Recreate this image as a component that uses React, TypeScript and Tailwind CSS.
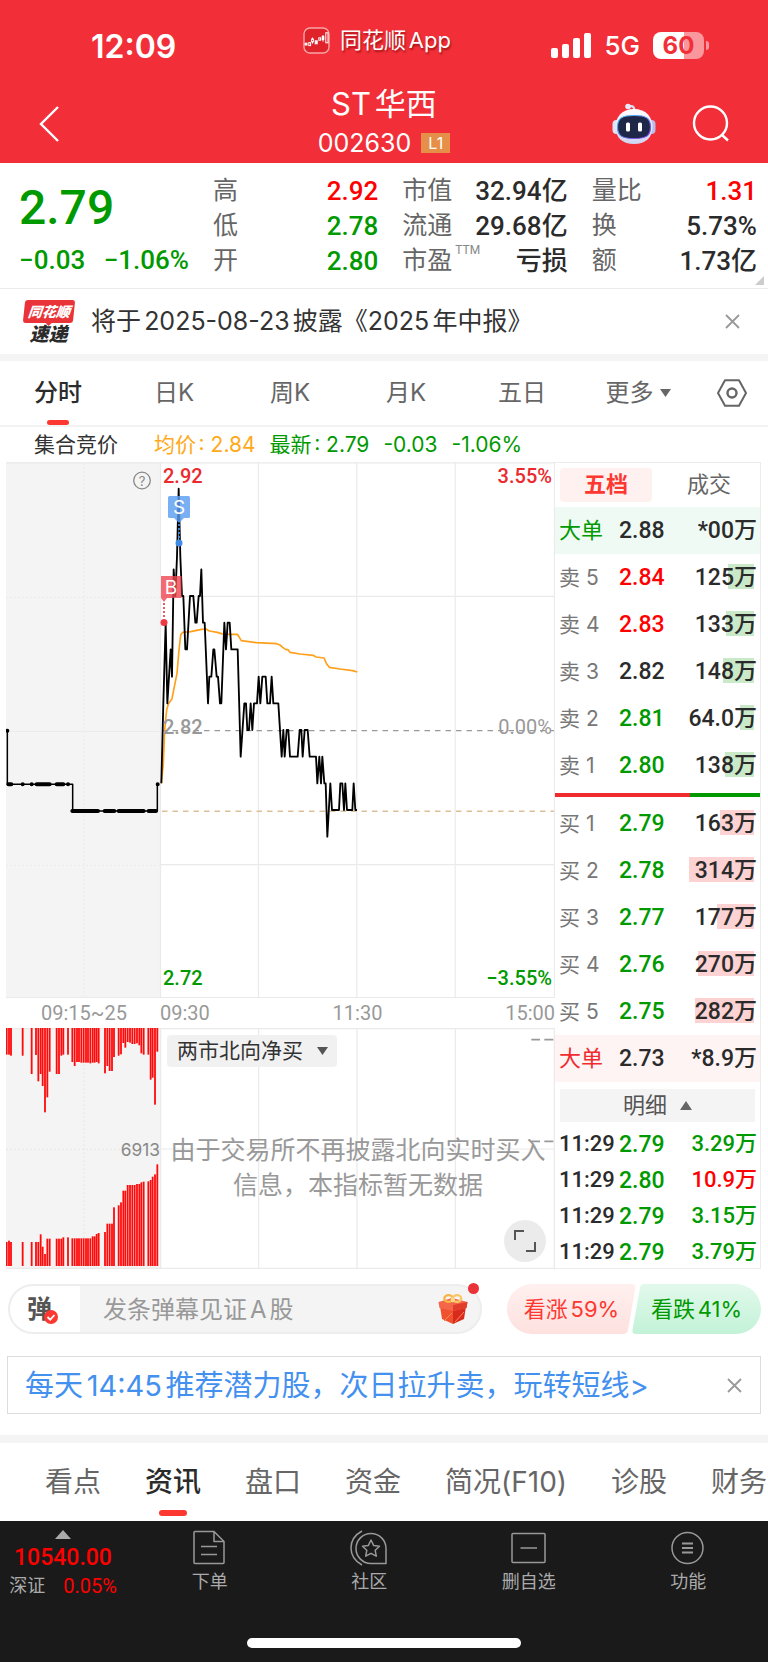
import { ReactNode } from "react";

const NUM = "font-['Roboto','Noto_Sans_CJK_SC',sans-serif] [text-autospace:no-autospace]";

type Tone = "up" | "down" | "flat";
const toneClass: Record<Tone, string> = {
  up: "text-[#ff0000]",
  down: "text-[#009900]",
  flat: "text-[#2b2b2b]",
};

function StatusBar() {
  return (
    <div className="grid h-[84px] grid-cols-[1fr_auto_1fr] items-center">
      <span className="pt-[10px] pl-[91px] text-[32px] leading-none font-semibold">12:09</span>
      <span className="flex items-center gap-[10px] pr-[14px] pb-1">
        <svg className="h-[27px] w-[27px]" viewBox="0 0 27 27" aria-hidden="true">
          <rect x="1" y="1" width="25" height="25" rx="6" fill="#e0222b" stroke="#f9a5a8" strokeWidth="1.4" />
          <g stroke="#fff" strokeWidth="1" fill="none">
            <rect x="2.2" y="16.2" width="1.8" height="1.8" fill="#fff" />
            <rect x="5.8" y="15.6" width="1.8" height="3" />
            <path d="M9.5 10.6v1.4M9.5 15v1.6" />
            <rect x="8.6" y="12" width="1.8" height="2.8" />
            <rect x="12.2" y="13.8" width="2" height="3" fill="#fff" />
            <rect x="15.8" y="10.8" width="1.8" height="2.4" />
            <rect x="19.2" y="9.6" width="1.6" height="3" fill="#fff" />
            <path d="M20 8v6.6" />
            <rect x="22.8" y="5.8" width="2.2" height="10" />
          </g>
        </svg>
        <span className="text-[22px] leading-none text-shadow-[1px_2px_2px_rgb(110_0_0_/_0.6)]">同花顺App</span>
      </span>
      <span className="flex items-center justify-end gap-[13px] pt-[7px] pr-[59px]">
        <svg className="h-[26px] w-[40px]" viewBox="0 0 40 26" fill="#fff" aria-hidden="true">
          <rect x="0" y="15" width="7" height="10" rx="2" />
          <rect x="11" y="11" width="7" height="14" rx="2" />
          <rect x="22" y="5" width="7" height="20" rx="2" />
          <rect x="33" y="0" width="7" height="25" rx="2" />
        </svg>
        <span className="text-[26px] leading-none font-medium">5G</span>
        <span className="flex items-center gap-[2px]">
          <span className="flex h-[27px] w-[51px] items-center justify-center rounded-[8px] bg-[linear-gradient(90deg,#fff_60%,#f9979c_60%)] text-[24px] leading-none font-bold text-[#f22f38]">
            60
          </span>
          <span className="h-[9px] w-[3px] rounded-r-full bg-[#f9979c]" />
        </span>
      </span>
    </div>
  );
}

function Robot() {
  return (
    <svg className="h-[42px] w-[44px]" viewBox="0 0 44 42" aria-hidden="true">
      <defs>
        <linearGradient id="robotHead" x1="0" y1="0" x2="0" y2="1">
          <stop offset="0" stopColor="#ffffff" />
          <stop offset="1" stopColor="#cfd4f2" />
        </linearGradient>
        <linearGradient id="robotRim" x1="0" y1="0" x2="1" y2="1">
          <stop offset="0" stopColor="#45c8f5" />
          <stop offset="1" stopColor="#8a35e8" />
        </linearGradient>
      </defs>
      <path d="M16 4C21 2 22.500 4 22.500 8" fill="none" stroke="#d9def6" strokeWidth="2.200" />
      <circle cx="16" cy="3.500" r="2.800" fill="#e6eafa" />
      <rect x="0.500" y="17" width="8" height="14" rx="4" fill="#dfe3f7" />
      <rect x="35.500" y="17" width="8" height="14" rx="4" fill="#b9bdea" />
      <path d="M22 6C34 6 40.500 14 40.500 24C40.500 35 33 41 22 41S3.500 35 3.500 24C3.500 14 10 6 22 6Z" fill="url(#robotHead)" />
      <path
        d="M22 12.500C34 12.500 38.500 15 38.500 24C38.500 33 34 35.500 22 35.500S5.500 33 5.500 24C5.500 15 10 12.500 22 12.500Z"
        fill="#1e2748"
        stroke="url(#robotRim)"
        strokeWidth="1.200"
      />
      <rect x="14" y="19.500" width="4" height="9" rx="1.500" fill="#fff" />
      <rect x="26" y="19.500" width="4" height="9" rx="1.500" fill="#fff" />
    </svg>
  );
}

function Header() {
  return (
    <header className="bg-[#f22f38] text-white">
      <StatusBar />
      <div className="grid h-[79px] grid-cols-[1fr_auto_1fr] items-center">
        <button aria-label="返回" className="ml-[38px] w-fit">
          <svg className="h-[36px] w-[22px]" viewBox="0 0 22 36" fill="none" stroke="#fff" strokeWidth="2.400" aria-hidden="true">
            <path d="M20 1L3 18L20 35" />
          </svg>
        </button>
        <div className="flex flex-col items-center">
          <h1 className="text-[31px] leading-[38px]">ST华西</h1>
          <p className="flex items-center gap-[10px] text-[25px] leading-[40px]">
            002630
            <span className="flex h-[20px] w-[29px] items-center justify-center bg-[#e58f49] text-[16px]">L1</span>
          </p>
        </div>
        <div className="flex items-center justify-end gap-[36px] pr-[38px]">
          <button aria-label="智能助手">
            <Robot />
          </button>
          <button aria-label="搜索">
            <svg className="h-[38px] w-[38px]" viewBox="0 0 38 38" fill="none" stroke="#fff" strokeWidth="2.400" aria-hidden="true">
              <circle cx="18.500" cy="18" r="16.500" />
              <path d="M29.500 29.500L36 35.500" />
            </svg>
          </button>
        </div>
      </div>
    </header>
  );
}

type Stat = { label: string; note?: string; value: string; tone: Tone };
const statColumns: Stat[][] = [
  [
    { label: "高", value: "2.92", tone: "up" },
    { label: "低", value: "2.78", tone: "down" },
    { label: "开", value: "2.80", tone: "down" },
  ],
  [
    { label: "市值", value: "32.94亿", tone: "flat" },
    { label: "流通", value: "29.68亿", tone: "flat" },
    { label: "市盈", note: "TTM", value: "亏损", tone: "flat" },
  ],
  [
    { label: "量比", value: "1.31", tone: "up" },
    { label: "换", value: "5.73%", tone: "flat" },
    { label: "额", value: "1.73亿", tone: "flat" },
  ],
];

function Quote() {
  return (
    <section className={`relative grid grid-cols-[170px_1fr_1fr_1fr] gap-6 border-b border-[#ececec] pt-[10px] pr-[11px] pb-[10px] pl-[19px] ${NUM}`}>
      <div className="text-[#009900]">
        <p className="h-[70px] text-[48px] leading-[70px] font-medium">2.79</p>
        <p className="flex justify-between text-[26px] leading-[34px] font-medium">
          <span>−0.03</span>
          <span>−1.06%</span>
        </p>
      </div>
      {statColumns.map((column, i) => (
        <dl key={i}>
          {column.map((s) => (
            <div key={s.label} className="flex h-[35px] items-center justify-between whitespace-nowrap">
              <dt className="flex text-[25px] leading-none text-[#666]">
                {s.label}
                {s.note && <sup className="-top-1 ml-[3px] text-[12px] leading-none text-[#888]">{s.note}</sup>}
              </dt>
              <dd className={`text-[26px] leading-none font-medium ${toneClass[s.tone]}`}>{s.value}</dd>
            </div>
          ))}
        </dl>
      ))}
      <svg className="absolute right-[4px] bottom-[3px] h-[9px] w-[9px]" viewBox="0 0 9 9" aria-hidden="true">
        <path d="M9 0V9H0Z" fill="#ccc" />
      </svg>
    </section>
  );
}

function Cross() {
  return (
    <svg className="h-[15px] w-[15px]" viewBox="0 0 15 15" stroke="#999" strokeWidth="1.800" aria-hidden="true">
      <path d="M1 1L14 14M14 1L1 14" />
    </svg>
  );
}

function News() {
  return (
    <section className="flex h-[72px] items-center border-b-[7px] border-[#f4f4f4] pr-[28px] pl-[22px]">
      <div className="flex w-[53px] flex-col items-center italic">
        <span className="relative flex h-[23px] w-[50px] -skew-x-6 items-center justify-center rounded-[3px] bg-[#ea3338] text-[14px] leading-none font-black text-white">
          同花顺
          <svg className="absolute -bottom-[3px] left-[22px] h-[4px] w-[8px]" viewBox="0 0 8 4" aria-hidden="true">
            <path d="M0 0H8L4 4Z" fill="#ea3338" />
          </svg>
        </span>
        <span className="pt-[3px] text-[19px] leading-[18px] font-black text-[#2b2b2b]">速递</span>
      </div>
      <a href="#report" className="ml-4 flex-1 text-[25px] leading-none whitespace-nowrap text-[#333]">
        将于2025-08-23披露《2025年中报》
      </a>
      <button aria-label="关闭公告">
        <Cross />
      </button>
    </section>
  );
}

function PeriodTabs() {
  return (
    <nav className="grid h-[66px] grid-cols-[repeat(6,1fr)_72px] border-b-2 border-[#f2f2f2] text-[24px] text-[#666] [text-autospace:no-autospace]">
      <button className="relative font-medium text-[#2b2b2b]">
        分时
        <span className="absolute bottom-0 left-1/2 h-[5px] w-[22px] -translate-x-1/2 rounded-full bg-[#fd3830]" />
      </button>
      <button>日K</button>
      <button>周K</button>
      <button>月K</button>
      <button>五日</button>
      <button className="flex items-center justify-center gap-[6px]">
        更多
        <svg className="h-[8px] w-[11px]" viewBox="0 0 11 8" fill="#666" aria-hidden="true">
          <path d="M0 0H11L5.500 8Z" />
        </svg>
      </button>
      <button aria-label="设置" className="flex items-center justify-center">
        <svg className="h-[28px] w-[30px]" viewBox="0 0 30 28" fill="none" stroke="#666" strokeWidth="2" strokeLinejoin="round" aria-hidden="true">
          <path d="M8 1.200H22L29 14L22 26.800H8L1 14Z" />
          <circle cx="15" cy="14" r="4.500" strokeWidth="2.400" />
        </svg>
      </button>
    </nav>
  );
}

function PriceSummary() {
  return (
    <div className="flex h-[35px] items-center pl-[34px] text-[21px] leading-none whitespace-nowrap">
      <span className="w-[120px] text-[#333]">集合竞价</span>
      <p className="flex gap-[14px] text-[#009900]">
        <span className="text-[#ffa91a]">均价: 2.84</span>
        <span>最新: 2.79</span>
        <span>-0.03</span>
        <span>-1.06%</span>
      </p>
    </div>
  );
}

const pricePoints =
  "484,700 490,460 497,218 502,460 507,380 512,298 516,380 521,58 526,138 531,20 536,-184 541,20 546,138 550,138 556,298 561,298 570,138 580,138 586,218 590,218 596,138 600,138 604,58 609,218 614,218 624,460 628,380 634,380 640,298 643,298 650,380 654,380 660,460 664,460 673,218 678,298 683,218 689,218 694,298 713,298 722,620 733,460 738,460 742,540 747,540 752,460 757,540 762,460 771,460 776,380 781,460 787,380 797,380 802,460 810,460 815,380 820,460 835,460 845,620 850,540 854,620 860,540 865,540 870,620 893,620 899,540 904,540 908,620 914,540 923,540 929,620 948,620 952,700 958,620 963,700 967,620 973,700 977,700 982,860 991,700 996,780 1017,780 1021,700 1027,700 1032,780 1036,700 1041,780 1057,780 1061,700 1066,780 1071,780";
const averagePoints =
  "484,700 490,640 494,540 500,480 505,462 516,446 522,415 531,370 537,300 542,255 548,247 572,245 605,238 618,237 628,243 652,247 672,253 712,253 718,262 724,272 770,278 830,281 840,285 848,292 858,299 864,299 870,307 900,312 940,316 948,321 972,324 980,342 988,352 1020,357 1058,362 1072,366";

function PriceChart() {
  return (
    <svg className="block w-full" viewBox="6 462 549 536" role="img" aria-label="分时走势">
      <rect x="6" y="462" width="154.500" height="536" fill="#f4f4f4" />
      <g stroke="#ebebeb" strokeWidth="1" fill="none">
        <path d="M84 463V998M6 597.500H160M6 865.500H160" strokeDasharray="2 2" />
        <path d="M6 731.500H160" />
      </g>
      <g stroke="#eaeaea" strokeWidth="1.200" fill="none">
        <path d="M6 462.800H555M6 997.500H555M160.500 462V998M258.500 462V998M356.800 462V998M455.200 462V998M554.500 462V998" />
        <path d="M161 596.400H555M161 864.700H555" />
      </g>
      <path d="M162 730.600H554" stroke="#999" strokeWidth="1.400" strokeDasharray="5.500 5" />
      <path d="M162 811.200H554" stroke="#dcc09a" strokeWidth="1.400" strokeDasharray="5.500 5" />
      <g transform="translate(0 550) scale(0.333333)" fill="none" stroke="#000" strokeLinejoin="round">
        <path d="M22 542V703H218V783H472V703" strokeWidth="4.500" />
        <g strokeWidth="12" strokeLinecap="round">
          <path d="M22 542h.1M25 703H34M68 703h.1M95 703h.1M110 703H149M170 703H190M204 703h.1" />
          <path d="M217 783H294M314 783H343M356 783H431M446 783H468M473 703h.1" />
        </g>
        <polyline points={averagePoints} stroke="#ff9f1a" strokeWidth="5" />
        <polyline points={pricePoints} strokeWidth="5.500" />
      </g>
      <g>
        <rect x="168" y="496" width="22" height="22" rx="1.500" fill="#5b9df0" fillOpacity="0.820" />
        <path d="M174 518H184L179 523Z" fill="#5b9df0" fillOpacity="0.820" />
        <path d="M179 520V539" stroke="#3f8be8" strokeWidth="1.800" strokeDasharray="2 2" />
        <circle cx="179" cy="543" r="3.500" fill="#3f8be8" />
        <rect x="161" y="576" width="20.500" height="22" fill="#ef4650" fillOpacity="0.800" />
        <path d="M164 603V618" stroke="#ef4650" strokeWidth="1.800" strokeDasharray="2 2" />
        <path d="M161 598H167L164 602Z" fill="#ef4650" fillOpacity="0.800" />
        <circle cx="164" cy="622.500" r="3.500" fill="#ef3a45" />
      </g>
      <g fontFamily="Inter, sans-serif" fontSize="19" fill="#fff" textAnchor="middle">
        <text x="179" y="514">S</text>
        <text x="171" y="594">B</text>
      </g>
      <g fontFamily="Roboto, sans-serif" fontSize="20" fontWeight="500">
        <text x="163" y="483" fill="#ea2a2e">2.92</text>
        <text x="163" y="734" fill="#999">2.82</text>
        <text x="163" y="985" fill="#009900">2.72</text>
        <g textAnchor="end">
          <text x="552" y="483" fill="#ea2a2e">3.55%</text>
          <text x="552" y="734" fill="#999" fontWeight="400">0.00%</text>
          <text x="552" y="985" fill="#009900">−3.55%</text>
        </g>
      </g>
      <circle cx="142" cy="480.500" r="8.300" fill="none" stroke="#888" strokeWidth="1.300" />
      <text x="142" y="485.500" fontFamily="Inter, sans-serif" fontSize="13" fill="#888" textAnchor="middle">?</text>
    </svg>
  );
}

// x position, bottom edge of the hanging bar, top edge of the standing bar
const volumeBars: [number, number, number][] = [
  [20, 284, 846], [27, 284, 842], [33, 287, 846], [68, 287, 846], [95, 342, 846], [108, 285, 846],
  [115, 364, 846], [122, 342, 823], [128, 378, 860], [135, 457, 882], [142, 412, 836], [149, 335, 836],
  [170, 342, 836], [177, 342, 836], [184, 287, 836], [190, 284, 832], [204, 284, 832], [217, 306, 835],
  [224, 318, 835], [231, 306, 835], [237, 306, 835], [244, 308, 835], [251, 308, 835], [258, 308, 835],
  [264, 308, 835], [271, 310, 835], [278, 308, 829], [284, 308, 829], [290, 306, 822], [296, 310, 819],
  [315, 340, 816], [322, 318, 791], [329, 333, 791], [336, 333, 791], [342, 291, 742], [356, 287, 736],
  [363, 283, 727], [370, 249, 692], [376, 263, 692], [383, 246, 675], [390, 248, 675], [397, 252, 675],
  [404, 252, 675], [411, 250, 672], [418, 256, 672], [424, 280, 667], [431, 284, 665], [445, 284, 664],
  [452, 359, 660], [458, 353, 650], [465, 434, 643], [472, 275, 613],
];

function IndicatorPanel() {
  return (
    <div className="relative">
      <svg className="block w-full" viewBox="18 204 1647 723" role="img" aria-label="竞价成交量">
        <rect x="18" y="204" width="463" height="723" fill="#f4f4f4" />
        <path d="M252 204V926M18 568H481" stroke="#e6e6e6" strokeWidth="3" strokeDasharray="6 6" />
        <path
          d="M18 206H1665M18 925H1665M482 206V926M776 206V926M1071 206V926M1366 206V926M1663 206V926M482 567H1664"
          stroke="#eaeaea"
          strokeWidth="3.600"
          fill="none"
        />
        <g fill="#ff0a0a">
          {volumeBars.map(([x, hang, stand]) => (
            <g key={x}>
              <rect x={x - 2.7} y="204" width="5.400" height={hang - 204} />
              <rect x={x - 2.7} y={stand} width="5.400" height={918 - stand} />
            </g>
          ))}
        </g>
        <text x="480" y="587" fontFamily="Inter, sans-serif" fontSize="52" fill="#888" textAnchor="end">6913</text>
        <path d="M1594 239H1620M1633 239H1660M1594 544H1620M1633 544H1660" stroke="#999" strokeWidth="5" />
      </svg>
      <div className="absolute top-[7px] left-[161px] flex items-center">
        <select
          aria-label="指标"
          className="h-[32px] w-[170px] appearance-none rounded-[4px] bg-[#f1f1f1] pl-[10px] text-[21px] leading-[32px] text-[#333]"
        >
          <option>两市北向净买</option>
        </select>
        <svg className="absolute right-[9px] h-[8px] w-[11px]" viewBox="0 0 11 8" fill="#555" aria-hidden="true">
          <path d="M0 0H11L5.500 8Z" />
        </svg>
      </div>
      <p className="absolute top-[105px] right-0 w-[394px] text-center text-[25px] leading-[35px] text-[#999]">
        由于交易所不再披露北向实时买入
        <br />
        信息，本指标暂无数据
      </p>
      <button
        aria-label="全屏"
        className="absolute right-[9px] bottom-[7px] flex h-[42px] w-[42px] items-center justify-center rounded-full bg-[#ebebeb]"
      >
        <svg className="h-[22px] w-[22px]" viewBox="0 0 22 22" fill="none" stroke="#555" strokeWidth="2" aria-hidden="true">
          <path d="M1 10V1H10M21 12V21H12" />
        </svg>
      </button>
    </div>
  );
}

function TimeAxis() {
  return (
    <div className={`grid grid-cols-[154px_1fr_1fr_1fr] text-[20px] leading-[30px] text-[#999] ${NUM}`}>
      <span className="pl-[35px]">09:15~25</span>
      <span>09:30</span>
      <span className="text-center">11:30</span>
      <span className="text-right">15:00</span>
    </div>
  );
}

type Level = { label: string; price: string; tone: Tone; volume: string; bar: number };
const sells: Level[] = [
  { label: "卖 5", price: "2.84", tone: "up", volume: "125万", bar: 26 },
  { label: "卖 4", price: "2.83", tone: "up", volume: "133万", bar: 28 },
  { label: "卖 3", price: "2.82", tone: "flat", volume: "148万", bar: 31 },
  { label: "卖 2", price: "2.81", tone: "down", volume: "64.0万", bar: 14 },
  { label: "卖 1", price: "2.80", tone: "down", volume: "138万", bar: 29 },
];
const buys: Level[] = [
  { label: "买 1", price: "2.79", tone: "down", volume: "163万", bar: 34 },
  { label: "买 2", price: "2.78", tone: "down", volume: "314万", bar: 65 },
  { label: "买 3", price: "2.77", tone: "down", volume: "177万", bar: 37 },
  { label: "买 4", price: "2.76", tone: "down", volume: "270万", bar: 56 },
  { label: "买 5", price: "2.75", tone: "down", volume: "282万", bar: 59 },
];

function LevelRow({ level, barClass }: { level: Level; barClass: string }) {
  return (
    <tr className="h-[47px]">
      <th scope="row" className="pl-[4px] text-left font-['Inter','Noto_Sans_CJK_SC',sans-serif] text-[21px] font-normal text-[#777]">
        {level.label}
      </th>
      <td className={toneClass[level.tone]}>{level.price}</td>
      <td className="relative pr-[3px] text-right">
        <span className={`absolute top-[10px] right-[6px] h-[25px] ${barClass}`} style={{ width: level.bar }} />
        <span className="relative">{level.volume}</span>
      </td>
    </tr>
  );
}

function BigOrderRow({ price, volume, rowClass, labelClass }: { price: string; volume: string; rowClass: string; labelClass: string }) {
  return (
    <tr className={`h-[47px] ${rowClass}`}>
      <th scope="row" className={`pl-[4px] text-left text-[22px] font-normal ${labelClass}`}>大单</th>
      <td>{price}</td>
      <td className="pr-[3px] text-right">{volume}</td>
    </tr>
  );
}

function Columns() {
  return (
    <colgroup>
      <col className="w-[64px]" />
      <col className="w-[54px]" />
      <col />
    </colgroup>
  );
}

const trades: { time: string; price: string; tone: Tone; amount: string; amountTone: Tone }[] = [
  { time: "11:29", price: "2.79", tone: "down", amount: "3.29万", amountTone: "down" },
  { time: "11:29", price: "2.80", tone: "down", amount: "10.9万", amountTone: "up" },
  { time: "11:29", price: "2.79", tone: "down", amount: "3.15万", amountTone: "down" },
  { time: "11:29", price: "2.79", tone: "down", amount: "3.79万", amountTone: "down" },
];

function OrderBook() {
  return (
    <aside className={`flex w-[206px] shrink-0 flex-col border-y border-r border-[#ececec] text-[23px] leading-none whitespace-nowrap text-[#2b2b2b] ${NUM}`}>
      <div className="flex h-[44px] items-center pl-[5px] text-[22px]">
        <button className="h-[34px] w-[92px] rounded-[4px] bg-[#fff1f0] font-bold text-[#fd3830]">五档</button>
        <button className="flex-1 pl-[6px] text-[#666]">成交</button>
      </div>
      <table className="w-full table-fixed border-collapse font-medium">
        <Columns />
        <tbody>
          <BigOrderRow price="2.88" volume="*00万" rowClass="bg-[#f0faf5]" labelClass="text-[#009900]" />
          {sells.map((l) => (
            <LevelRow key={l.label} level={l} barClass="bg-[#c9e9c9]" />
          ))}
          <tr className="h-[11px]">
            <td colSpan={3}>
              <span className="block h-[4px] bg-[linear-gradient(90deg,#f02b2f_66%,#009900_66%)]" />
            </td>
          </tr>
          {buys.map((l) => (
            <LevelRow key={l.label} level={l} barClass="bg-[#fcd2d3]" />
          ))}
          <BigOrderRow price="2.73" volume="*8.9万" rowClass="bg-[#fff4f4]" labelClass="text-[#f02b2f]" />
        </tbody>
      </table>
      <button className="mx-[5px] mt-[7px] mb-[4px] flex h-[33px] items-center justify-center gap-[13px] bg-[#f4f4f4] text-[22px] text-[#555]">
        明细
        <svg className="h-[9px] w-[12px]" viewBox="0 0 12 9" fill="#666" aria-hidden="true">
          <path d="M6 0L12 9H0Z" />
        </svg>
      </button>
      <table className="-mb-[2px] w-full table-fixed border-collapse font-medium">
        <Columns />
        <tbody>
          {trades.map((t, i) => (
            <tr key={i} className="h-[36px]">
              <td className="pl-[4px] text-[22px]">{t.time}</td>
              <td className={toneClass[t.tone]}>{t.price}</td>
              <td className={`pr-[3px] text-right text-[22px] ${toneClass[t.amountTone]}`}>{t.amount}</td>
            </tr>
          ))}
        </tbody>
      </table>
    </aside>
  );
}

function Gift() {
  return (
    <svg className="h-[32px] w-[30px]" viewBox="0 0 30 32" aria-hidden="true">
      <path d="M2 13L15 17V31L4 26Z" fill="#f0512f" />
      <path d="M28 13L15 17V31L26 26Z" fill="#d92a1e" />
      <path d="M0.500 9L14 5L29.500 9L28.500 15L15 18L1.500 15Z" fill="#f4664a" />
      <path d="M15 12L29.500 9L28.500 15L15 18Z" fill="#e23d2a" />
      <path d="M6 28L14 20M17 29L26 19" stroke="#fb8a55" strokeWidth="1" />
      <ellipse cx="10.500" cy="5.500" rx="4.200" ry="3.400" fill="none" stroke="#f6b545" strokeWidth="2.400" />
      <ellipse cx="19" cy="5.500" rx="4.200" ry="3.400" fill="none" stroke="#f9c765" strokeWidth="2.400" />
      <circle cx="14.800" cy="7" r="2.200" fill="#fbd98a" />
    </svg>
  );
}

function SentimentButton({ children, side }: { children: ReactNode; side: "left" | "right" }) {
  const isLeft = side === "left";
  return (
    <button className={`relative h-[50px] w-[129px] text-[22px] leading-none ${isLeft ? "text-[#fd3830]" : "-ml-[4px] text-[#009900]"}`}>
      <svg className="absolute inset-0 h-full w-full" viewBox="0 0 129 50" aria-hidden="true">
        <defs>
          <linearGradient id={isLeft ? "riseFill" : "fallFill"} x1="0" y1="0" x2="0" y2="1">
            <stop offset="0" stopColor={isLeft ? "#fff0ef" : "#e2f9ec"} />
            <stop offset="1" stopColor={isLeft ? "#fde1df" : "#c3f2d7"} />
          </linearGradient>
        </defs>
        {isLeft ? (
          <path d="M25 0H125Q129 0 128.300 4L121 46Q120 50 116 50H25A25 25 0 0 1 25 0Z" fill="url(#riseFill)" />
        ) : (
          <path d="M104 0H12Q8.500 0 8 4L0.500 46Q0 50 4 50H104A25 25 0 0 0 104 0Z" fill="url(#fallFill)" />
        )}
      </svg>
      <span className="relative">{children}</span>
    </button>
  );
}

function CommentBar() {
  return (
    <div className="flex items-center gap-[25px] pt-[15px] pr-[7px] pl-[8px]">
      <div className="relative flex h-[50px] min-w-0 flex-1 items-center rounded-full border-2 border-[#ededed] bg-[#f4f4f4]">
        <button aria-label="弹幕开关" className="relative flex h-full w-[70px] shrink-0 items-center rounded-l-full bg-white pl-[17px] text-[25px] leading-none font-bold text-[#555]">
          弹
          <svg className="absolute top-[24px] left-[34px] h-[14px] w-[14px]" viewBox="0 0 14 14" aria-hidden="true">
            <circle cx="7" cy="7" r="7" fill="#fd3830" />
            <path d="M3.500 7L6.200 9.600L10.500 5" fill="none" stroke="#fff" strokeWidth="1.800" />
          </svg>
        </button>
        <input
          aria-label="发条弹幕"
          placeholder="发条弹幕见证A股"
          className="h-full w-0 min-w-0 flex-1 bg-transparent pl-[23px] text-[24px] placeholder:text-[#999]"
        />
        <button aria-label="礼物" className="mr-[12px] shrink-0">
          <Gift />
        </button>
        <span className="absolute -top-[3px] right-[1px] h-[11px] w-[11px] rounded-full bg-[#ea3338]" />
      </div>
      <div className="flex shrink-0">
        <SentimentButton side="left">看涨59%</SentimentButton>
        <SentimentButton side="right">看跌41%</SentimentButton>
      </div>
    </div>
  );
}

function Promo() {
  return (
    <div className="mx-[7px] mt-[22px] flex h-[58px] items-center justify-between border border-[#dcdcdc] pr-[18px] pl-[17px]">
      <a href="#promo" className="text-[29px] leading-none whitespace-nowrap text-[#4490ef]">
        每天14:45推荐潜力股，次日拉升卖，玩转短线&gt;
      </a>
      <button aria-label="关闭推荐">
        <Cross />
      </button>
    </div>
  );
}

function ContentTabs() {
  return (
    <nav className="mt-[21px] flex h-[86px] gap-[44px] overflow-hidden border-t-[8px] border-[#f4f4f4] pl-[45px] text-[28px] whitespace-nowrap text-[#666]">
      {["看点", "资讯", "盘口", "资金", "简况(F10)", "诊股", "财务"].map((name) => (
        <button key={name} className={`relative shrink-0 ${name === "资讯" ? "font-medium text-[#2b2b2b]" : ""}`}>
          {name}
          {name === "资讯" && (
            <span className="absolute bottom-[5px] left-1/2 h-[6px] w-[28px] -translate-x-1/2 rounded-full bg-[#fd3830]" />
          )}
        </button>
      ))}
    </nav>
  );
}

const dockItems: { name: string; icon: ReactNode }[] = [
  {
    name: "下单",
    icon: (
      <>
        <path d="M3 1.500H22L32 11.500V32.500Q32 33.500 31 33.500H3Q2 33.500 2 32.500V2.500Q2 1.500 3 1.500Z" />
        <path d="M22 1.500V11.500H32M9 16.500H25M9 24.500H25" />
      </>
    ),
  },
  {
    name: "社区",
    icon: (
      <>
        <path d="M20 33.500H35V18.500A15 15 0 1 0 20 33.500Z" />
        <path d="M11 1Q0 7 0 18T11 35" />
        <path d="M20 10L22.600 15.400L28.500 16.200L24.200 20.300L25.300 26.200L20 23.300L14.700 26.200L15.800 20.300L11.500 16.200L17.400 15.400Z" />
      </>
    ),
  },
  {
    name: "删自选",
    icon: (
      <>
        <rect x="1" y="3.500" width="33" height="29" rx="1" />
        <path d="M9.500 18H26" />
      </>
    ),
  },
  {
    name: "功能",
    icon: (
      <>
        <circle cx="17.500" cy="18" r="15.500" />
        <path d="M12 13.500H23M12 18H23M12 22.500H23" strokeWidth="2" />
      </>
    ),
  },
];

function Dock() {
  return (
    <footer className="bg-[#1a1a1a] text-[#aaa]">
      <div className="grid h-[117px] grid-cols-[130px_1fr_1fr_1fr_1fr]">
        <button className={`flex flex-col items-center pt-[9px] pr-1 ${NUM}`}>
          <svg className="h-[9px] w-[16px]" viewBox="0 0 16 9" fill="#aaa" aria-hidden="true">
            <path d="M8 0L16 9H0Z" />
          </svg>
          <span className="pt-[8px] text-[23px] leading-[22px] font-medium text-[#ff0000]">10540.00</span>
          <span className="flex gap-[18px] pt-[6px] text-[18px] leading-[22px]">
            深证
            <span className="text-[20px] text-[#ff0000]">0.05%</span>
          </span>
        </button>
        {dockItems.map((item) => (
          <button key={item.name} className="flex flex-col items-center gap-[4px] pt-[9px] text-[18px] leading-[24px]">
            <svg className="h-[36px] w-[36px] overflow-visible" viewBox="0 0 36 36" fill="none" stroke="#999" strokeWidth="1.500" strokeLinejoin="round" aria-hidden="true">
              {item.icon}
            </svg>
            {item.name}
          </button>
        ))}
      </div>
      <div className="pb-[14px]">
        <div className="mx-auto h-[10px] w-[274px] rounded-full bg-white" />
      </div>
    </footer>
  );
}

export default function App() {
  return (
    <div className="min-h-screen bg-white font-['Inter','Noto_Sans_CJK_SC',sans-serif] [text-autospace:normal]" lang="zh-CN">
      <Header />
      <main>
        <Quote />
        <News />
        <PeriodTabs />
        <PriceSummary />
        <section className="flex pr-[7px] pl-[6px]">
          <div className="min-w-0 flex-1">
            <PriceChart />
            <TimeAxis />
            <IndicatorPanel />
          </div>
          <OrderBook />
        </section>
        <CommentBar />
        <Promo />
        <ContentTabs />
      </main>
      <Dock />
    </div>
  );
}
